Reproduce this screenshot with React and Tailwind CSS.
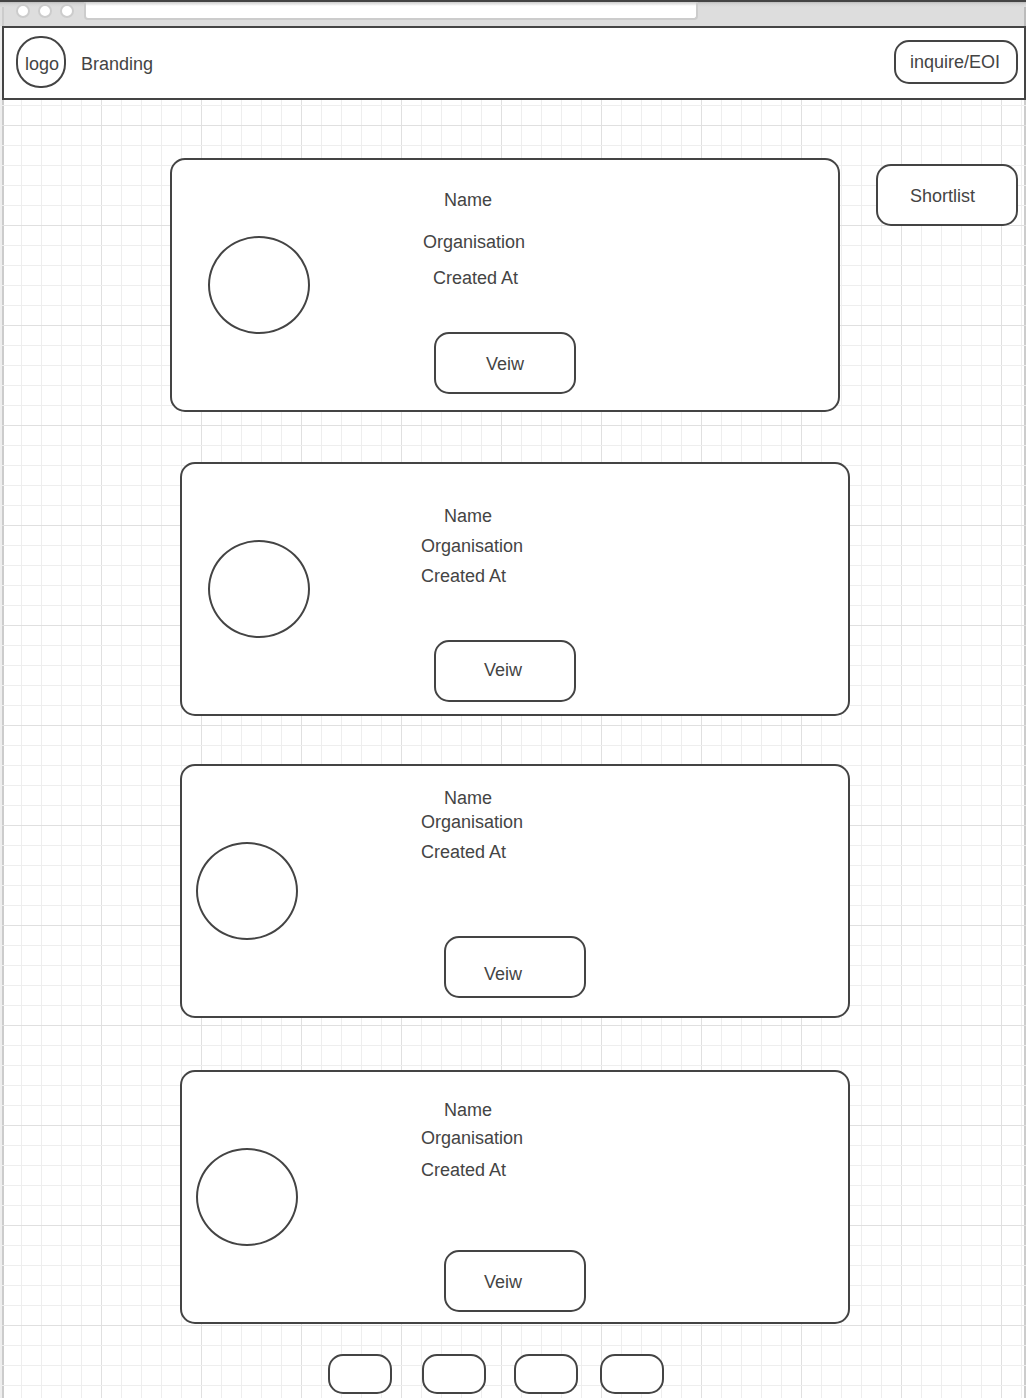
const CARDS = [
  {
    id: 1,
    card: "mr-2.5",
    avatar: "ml-9",
    info: "ml-[111px] pt-[30px] pb-4",
    org: "mt-[22px] ml-0.5",
    created: "mt-4 ml-3",
    button: "mt-11 ml-[13px] items-center justify-center pt-0.5",
  },
  {
    id: 2,
    card: "ml-2.5 mt-[50px]",
    avatar: "ml-[26px]",
    info: "ml-[111px] pt-[42px] pb-3",
    org: "mt-2.5",
    created: "mt-2.5",
    button: "mt-[54px] ml-[13px] items-start pl-12 pt-[18px]",
  },
  {
    id: 3,
    card: "ml-2.5 mt-12",
    avatar: "ml-3.5",
    info: "ml-[123px] pt-[22px] pb-[18px]",
    org: "mt-1",
    created: "mt-2.5",
    button: "mt-[74px] ml-[23px] items-start pl-[38px] pt-[26px]",
  },
  {
    id: 4,
    card: "ml-2.5 mt-[52px]",
    avatar: "ml-3.5",
    info: "ml-[123px] pt-7 pb-2.5",
    org: "mt-2",
    created: "mt-3",
    button: "mt-[70px] ml-[23px] items-start pl-[38px] pt-5",
  },
];

function BrowserBar() {
  return (
    <div className="-ml-0.5 flex h-[26px] border-t-2 border-[#444] bg-[linear-gradient(#bbb,#d4d4d4_2px,#ddd_5px,transparent_5px),linear-gradient(90deg,#e0e0e0_2px,#ccc_2px,#ccc_4px,#ddd_4px,#ddd_calc(100%-2px),#bbb_calc(100%-2px))] pl-4">
      <div className="flex gap-2 pt-0.5">
        <span className="size-3.5 rounded-full border-2 border-[#ccc] bg-white" />
        <span className="size-3.5 rounded-full border-2 border-[#ccc] bg-white" />
        <span className="size-3.5 rounded-full border-2 border-[#ccc] bg-white" />
      </div>
      <input
        type="text"
        aria-label="Address"
        className="mr-[328px] ml-2.5 h-[18px] min-w-0 flex-1 rounded-b border-2 border-t-0 border-[#ccc] bg-[linear-gradient(#ccc,#fff_4px)] px-2 text-xs outline-none"
      />
    </div>
  );
}

function Header() {
  return (
    <header className="flex items-start border-2 border-[#444] bg-white pt-2 pr-1.5 pb-2.5 pl-3">
      <a
        href="#"
        className="flex h-[52px] w-[50px] items-center justify-center rounded-[24px] border-2 border-[#444] pt-1 pl-0.5"
      >
        logo
      </a>
      <span className="mt-[18px] ml-[15px]">Branding</span>
      <button
        type="button"
        className="mt-1 ml-auto h-11 w-[124px] rounded-[15px] border-2 border-[#444] pl-3.5 text-left"
      >
        inquire/EOI
      </button>
    </header>
  );
}

function ProfileCard({ item }) {
  return (
    <article className={`flex rounded-[15px] border-2 border-[#444] bg-white ${item.card}`}>
      <div
        className={`h-[98px] w-[102px] shrink-0 self-center rounded-[50%] border-2 border-[#444] ${item.avatar}`}
      />
      <div className={`flex flex-col items-start ${item.info}`}>
        <h2 className="ml-[23px]">Name</h2>
        <p className={item.org}>Organisation</p>
        <p className={item.created}>Created At</p>
        <button
          type="button"
          className={`flex h-[62px] w-[142px] rounded-[15px] border-2 border-[#444] ${item.button}`}
        >
          Veiw
        </button>
      </div>
    </article>
  );
}

function Pagination() {
  return (
    <nav aria-label="Pages" className="mt-[30px] flex pl-[158px]">
      <button type="button" aria-label="Page 1" className="h-10 w-16 rounded-[15px] border-2 border-[#444] bg-white" />
      <button type="button" aria-label="Page 2" className="ml-[30px] h-10 w-16 rounded-[15px] border-2 border-[#444] bg-white" />
      <button type="button" aria-label="Page 3" className="ml-7 h-10 w-16 rounded-[15px] border-2 border-[#444] bg-white" />
      <button type="button" aria-label="Page 4" className="ml-[22px] h-10 w-16 rounded-[15px] border-2 border-[#444] bg-white" />
    </nav>
  );
}

const GRID =
  "bg-[linear-gradient(90deg,#eee_2px,transparent_2px),linear-gradient(#e0e0e0_1px,transparent_1px),linear-gradient(#eee_1px,transparent_1px),linear-gradient(90deg,#ccc_4px,transparent_4px,transparent_calc(100%-2px),#ccc_calc(100%-2px)),linear-gradient(90deg,#e0e0e0_1px,transparent_1px),linear-gradient(90deg,#eee_1px,transparent_1px)] bg-[size:auto,100px_100px,20px_20px,auto,100px_100px,20px_20px] bg-[position:0_0,0_25px,0_5px,0_0,1px_0,1px_0]";

export default function App() {
  return (
    <div
      className={`min-h-screen bg-white pl-0.5 font-['Liberation_Sans',Arial,sans-serif] text-[18px] leading-5 text-[#444] ${GRID}`}
    >
      <BrowserBar />
      <Header />
      <main className="flex items-start gap-[26px] pt-[58px] pr-2 pb-1 pl-[168px]">
        <section className="min-w-0 flex-1">
          {CARDS.map((item) => (
            <ProfileCard key={item.id} item={item} />
          ))}
          <Pagination />
        </section>
        <button
          type="button"
          className="mt-1.5 h-[62px] w-[142px] rounded-[15px] border-2 border-[#444] bg-white pt-0.5 pl-8 text-left"
        >
          Shortlist
        </button>
      </main>
    </div>
  );
}
